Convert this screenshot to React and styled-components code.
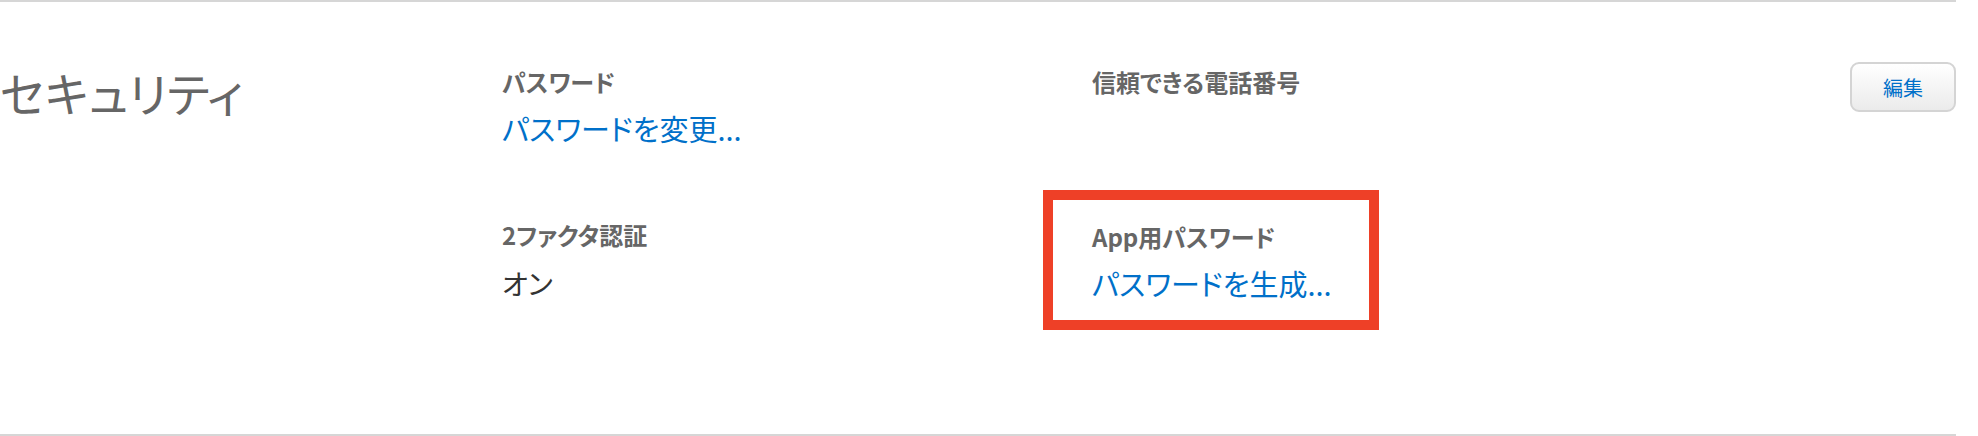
import React from "react";
import styled, { createGlobalStyle } from "styled-components";

const GlobalStyle = createGlobalStyle`
  html, body {
    margin: 0;
    padding: 0;
    background: #fff;
  }
  body {
    font-family: "Noto Sans CJK JP", "Noto Sans", sans-serif;
    font-feature-settings: "palt";
    -webkit-font-smoothing: antialiased;
  }
`;

const Section = styled.section`
  width: 1956px;
  height: 436px;
  box-sizing: border-box;
  border-top: 2px solid #d6d6d6;
  border-bottom: 2px solid #d6d6d6;
  padding-top: 60px;
  display: flex;
  align-items: flex-start;
`;

const Title = styled.h2`
  width: 502px;
  flex-shrink: 0;
  margin: 4px 0 0;
  font-size: 47px;
  line-height: 52px;
  font-weight: 400;
  color: #666;
`;

const Fields = styled.div`
  flex: 1;
  margin-top: 4px;
  display: grid;
  grid-template-columns: 590px 1fr;
  row-gap: 73px;
  align-items: start;
`;

const Field = styled.div`
  position: relative;
  display: flex;
  flex-direction: column;
  gap: 12px;
  justify-self: start;
  margin-top: ${(p) => (p.$highlighted ? "2px" : "0")};

  ${(p) =>
    p.$highlighted &&
    `
    &::after {
      content: "";
      position: absolute;
      top: -31px;
      right: -47px;
      bottom: -29px;
      left: -49px;
      border: 10px solid #ee4027;
      pointer-events: none;
    }
  `}
`;

const Label = styled.div`
  font-size: 24px;
  line-height: 32px;
  font-weight: 700;
  color: #666;
`;

const Link = styled.a`
  font-size: 29px;
  line-height: 36px;
  color: #0070c9;
  text-decoration: none;
  cursor: pointer;
`;

const Value = styled.div`
  font-size: 28px;
  line-height: 36px;
  margin-top: 2px;
  color: #333;
`;

const EditButton = styled.button`
  flex-shrink: 0;
  width: 106px;
  height: 50px;
  box-sizing: border-box;
  border: 2px solid #d4d4d4;
  border-radius: 9px;
  background: linear-gradient(#ffffff, #ebebeb);
  font-family: inherit;
  font-size: 20px;
  color: #0070c9;
  cursor: pointer;
  padding: 0;
`;

export default function App() {
  return (
    <>
      <GlobalStyle />
      <Section>
        <Title>セキュリティ</Title>
        <Fields>
          <Field>
            <Label>パスワード</Label>
            <Link>パスワードを変更...</Link>
          </Field>
          <Field>
            <Label>信頼できる電話番号</Label>
          </Field>
          <Field>
            <Label>2ファクタ認証</Label>
            <Value>オン</Value>
          </Field>
          <Field $highlighted>
            <Label>App用パスワード</Label>
            <Link>パスワードを生成...</Link>
          </Field>
        </Fields>
        <EditButton>編集</EditButton>
      </Section>
    </>
  );
}
